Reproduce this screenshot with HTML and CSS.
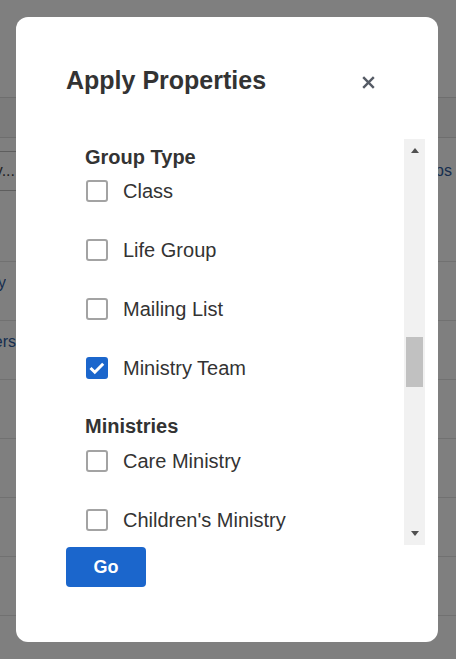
FILE: index.html
```html
<!DOCTYPE html>
<html lang="en">
<head>
<meta charset="utf-8">
<title>Apply Properties</title>
<link rel="stylesheet" href="styles.css">
</head>
<body>
<div class="page">
  <header class="page-header"></header>
  <div class="toolbar"></div>
  <div class="filters">
    <div class="search"><span class="clip clip-search">Filter by...</span></div>
    <span class="filter-link">Groups</span>
  </div>
  <div class="table">
    <div class="row"></div>
    <div class="row"><span class="clip clip-y">Everybody</span></div>
    <div class="row"><span class="clip clip-ers">Volunteers</span></div>
    <div class="row"></div>
    <div class="row"></div>
    <div class="row"></div>
    <div class="row"></div>
    <div class="row"></div>
  </div>
</div>
<div class="overlay"></div>
<div class="modal">
  <div class="modal-header">
    <h2 class="modal-title">Apply Properties</h2>
    <svg class="close" width="13" height="13" viewBox="0 0 13 13"><path d="M1.2 1.2 L11.8 11.8 M11.8 1.2 L1.2 11.8" stroke="#555b65" stroke-width="2.4" stroke-linecap="butt"/></svg>
  </div>
  <div class="scroll">
    <div class="options">
      <h3 class="group-title">Group Type</h3>
      <label class="option"><span class="box"></span>Class</label>
      <label class="option"><span class="box"></span>Life Group</label>
      <label class="option"><span class="box"></span>Mailing List</label>
      <label class="option"><span class="box checked"><svg width="22" height="22" viewBox="0 0 22 22"><path d="M4.5 11 L8.8 15.2 L17.2 6.8" fill="none" stroke="#fff" stroke-width="3"/></svg></span>Ministry Team</label>
      <h3 class="group-title">Ministries</h3>
      <label class="option"><span class="box"></span>Care Ministry</label>
      <label class="option"><span class="box"></span>Children's Ministry</label>
      <label class="option"><span class="box"></span>Music Ministry</label>
    </div>
    <div class="scrollbar">
      <div class="sb-btn sb-up"><span class="tri-up"></span></div>
      <div class="sb-track"><div class="sb-thumb"></div></div>
      <div class="sb-btn sb-down"><span class="tri-down"></span></div>
    </div>
  </div>
  <button class="go">Go</button>
</div>
</body>
</html>
```
FILE: styles.css
```css
html, body {
  margin: 0;
  padding: 0;
}
body {
  width: 456px;
  height: 659px;
  overflow: hidden;
  position: relative;
  background: #fff;
  font-family: "Liberation Sans", Arial, sans-serif;
}
.page-header {
  height: 97px;
  border-bottom: 1px solid #dcdcdc;
}
.toolbar {
  height: 39px;
  background: #f7f7f7;
  border-bottom: 1px solid #dcdcdc;
}
.filters {
  height: 65px;
  box-sizing: border-box;
  padding-top: 13px;
  display: flex;
  justify-content: space-between;
  align-items: flex-start;
}
.search {
  width: 200px;
  height: 40px;
  box-sizing: border-box;
  border-top: 1px solid #bdbdbd;
  border-bottom: 1px solid #bdbdbd;
  display: flex;
  align-items: center;
}
.clip {
  display: flex;
  justify-content: flex-end;
  overflow: hidden;
  white-space: nowrap;
  font-size: 16px;
}
.clip-search {
  width: 15px;
  color: #444;
}
.filter-link {
  line-height: 40px;
  font-size: 16px;
  color: #2e5c9e;
  margin-right: 4px;
}
.row {
  height: 59px;
  box-sizing: border-box;
  border-bottom: 1px solid #e2e2e2;
  display: flex;
  align-items: center;
}
.clip-y {
  width: 6px;
  color: #2e5c9e;
  margin-bottom: 16px;
}
.clip-ers {
  width: 16px;
  color: #2e5c9e;
  margin-bottom: 16px;
}
.overlay {
  position: absolute;
  inset: 0;
  background: rgba(0, 0, 0, 0.5);
}
.modal {
  position: absolute;
  left: 16px;
  top: 17px;
  width: 422px;
  height: 625px;
  box-sizing: border-box;
  padding: 48px 13px 0 50px;
  background: #fff;
  border-radius: 12px;
  display: flex;
  flex-direction: column;
}
.modal-header {
  display: flex;
  justify-content: space-between;
  align-items: center;
  height: 30px;
  padding-right: 50px;
}
.modal-title {
  margin: 0;
  font-size: 25px;
  line-height: 30px;
  font-weight: bold;
  color: #333;
}
.close {
  margin-top: 4px;
}
.scroll {
  margin-top: 44px;
  height: 406px;
  display: flex;
}
.options {
  flex: 1;
  overflow: hidden;
  padding: 7px 0 0 19px;
}
.group-title {
  margin: 0 0 12px 0;
  font-size: 20px;
  line-height: 22px;
  font-weight: bold;
  color: #333;
}
.option {
  display: flex;
  align-items: center;
  gap: 15px;
  height: 22px;
  margin-bottom: 37px;
  font-size: 20px;
  line-height: 22px;
  color: #333;
}
.option + .group-title {
  margin-top: -1px;
  margin-bottom: 13px;
}
.box {
  width: 22px;
  height: 22px;
  margin-left: 1px;
  box-sizing: border-box;
  border: 2px solid #a3a3a3;
  border-radius: 3px;
  flex: none;
  position: relative;
}
.box.checked {
  background: #1b66cc;
  border-color: #1b66cc;
}
.box.checked svg {
  position: absolute;
  left: -2px;
  top: -2px;
}
.scrollbar {
  width: 21px;
  background: #f1f1f1;
  display: flex;
  flex-direction: column;
}
.sb-btn {
  height: 17px;
  display: flex;
  justify-content: center;
  box-sizing: border-box;
}
.sb-up {
  padding-top: 9px;
}
.sb-down {
  padding-top: 3px;
}
.tri-up {
  width: 0;
  height: 0;
  border-left: 4.5px solid transparent;
  border-right: 4.5px solid transparent;
  border-bottom: 5px solid #505050;
}
.tri-down {
  width: 0;
  height: 0;
  border-left: 4.5px solid transparent;
  border-right: 4.5px solid transparent;
  border-top: 5px solid #505050;
}
.sb-track {
  flex: 1;
  padding: 0 2px;
}
.sb-thumb {
  margin-top: 181px;
  height: 50px;
  background: #c1c1c1;
}
.go {
  margin-top: 2px;
  width: 80px;
  height: 40px;
  border: none;
  border-radius: 4px;
  background: #1b66cc;
  color: #fff;
  font-family: "Liberation Sans", Arial, sans-serif;
  font-size: 18px;
  font-weight: bold;
  padding: 0;
}
```
